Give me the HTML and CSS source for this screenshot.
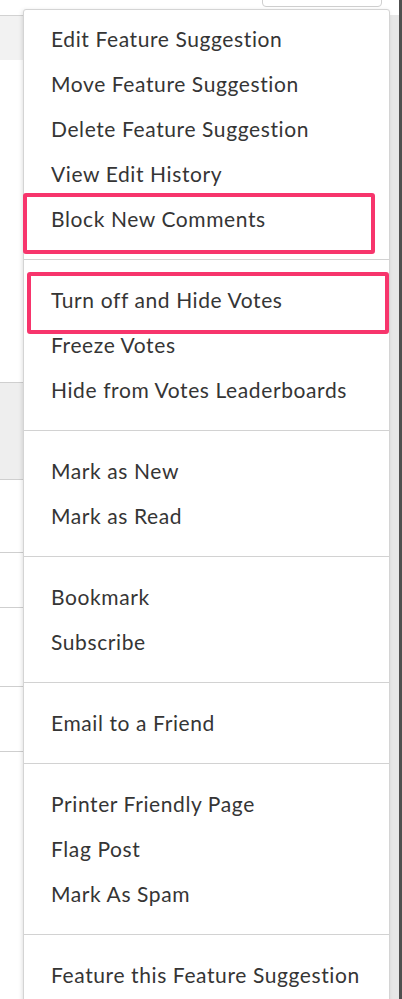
FILE: index.html
```html
<!DOCTYPE html>
<html>
<head>
<meta charset="utf-8">
<link rel="stylesheet" href="styles.css">
</head>
<body>
<div class="window">
  <div class="page">
    <div class="topbar">
      <div class="trigger"></div>
    </div>
    <div class="band band-head"></div>
    <div class="row r1"></div>
    <div class="row r2 gray"></div>
    <div class="row r3"></div>
    <div class="row r4"></div>
    <div class="row r5"></div>
    <div class="row r6"></div>
    <div class="row r7"></div>

    <div class="menu">
      <ul class="group first">
        <li>Edit Feature Suggestion</li>
        <li>Move Feature Suggestion</li>
        <li>Delete Feature Suggestion</li>
        <li>View Edit History</li>
        <li>Block New Comments</li>
      </ul>
      <ul class="group">
        <li>Turn off and Hide Votes</li>
        <li>Freeze Votes</li>
        <li>Hide from Votes Leaderboards</li>
      </ul>
      <ul class="group">
        <li>Mark as New</li>
        <li>Mark as Read</li>
      </ul>
      <ul class="group">
        <li>Bookmark</li>
        <li>Subscribe</li>
      </ul>
      <ul class="group">
        <li>Email to a Friend</li>
      </ul>
      <ul class="group">
        <li>Printer Friendly Page</li>
        <li>Flag Post</li>
        <li>Mark As Spam</li>
      </ul>
      <ul class="group">
        <li>Feature this Feature Suggestion</li>
      </ul>
    </div>

    <div class="mark mark-1"></div>
    <div class="mark mark-2"></div>
  </div>
  <div class="scrollbar"></div>
  <div class="edge"></div>
</div>
</body>
</html>
```

FILE: styles.css
```css
html, body {
  margin: 0;
  padding: 0;
  height: 999px;
  overflow: hidden;
  background: #ffffff;
}

.window {
  display: flex;
  height: 999px;
}

.page {
  position: relative;
  flex: 1;
  background: #ffffff;
}

.topbar {
  height: 15px;
  border-bottom: 1px solid #d2d2d2;
  background: #ffffff;
  display: flex;
  justify-content: flex-end;
  padding-right: 7px;
}

.trigger {
  width: 118px;
  height: 20px;
  margin-top: -15px;
  border: 1px solid #cfcfcf;
  border-radius: 4px;
  background: #ffffff;
}

.band-head {
  height: 44px;
  background: #f2f2f2;
}

.row {
  border-bottom: 1px solid #cfcfcf;
}

.r1 { height: 322px; }
.r2 { height: 96px; }
.r3 { height: 72px; }
.r4 { height: 54px; }
.r5 { height: 78px; }
.r6 { height: 64px; }
.r7 { height: 0; border-bottom: none; }

.gray { background: #eeeeee; }

.menu {
  position: absolute;
  left: 23px;
  top: 9px;
  width: 365px;
  background: #ffffff;
  border: 1px solid #d4d4d4;
  border-radius: 3px;
  box-shadow: -1px 1px 4px rgba(0, 0, 0, 0.12);
  font-family: "Lato", "Liberation Sans", sans-serif;
  font-size: 21px;
  letter-spacing: 0.6px;
  color: #353535;
}

.group {
  list-style: none;
  margin: 0;
  padding: 17px 0 18px;
  border-top: 1px solid #d2d2d2;
}

.group.first {
  border-top: none;
  padding-top: 6px;
}

.group li {
  height: 45px;
  line-height: 45px;
  padding-left: 27px;
  white-space: nowrap;
}

.mark {
  position: absolute;
  border: 4px solid #f7356c;
  border-radius: 3px;
  box-sizing: border-box;
}

.mark-1 {
  left: 23px;
  top: 193px;
  width: 352px;
  height: 61px;
}

.mark-2 {
  left: 27px;
  top: 272px;
  width: 362px;
  height: 62px;
}

.scrollbar {
  width: 9px;
  margin-top: 15px;
  background: #e7e7e7;
  border-left: 1px solid #dadada;
}

.edge {
  width: 3px;
  background: #4f4f4f;
}
```
